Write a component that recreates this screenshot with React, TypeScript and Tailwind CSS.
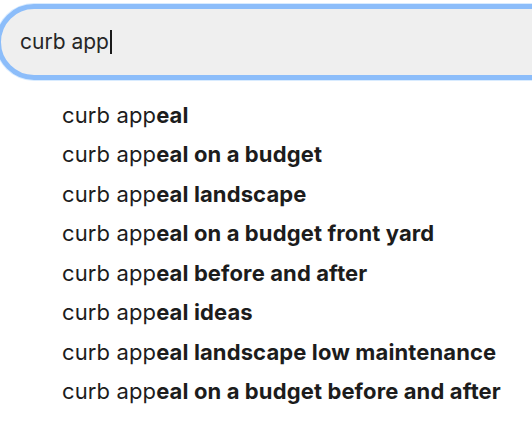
import { useState } from "react";

const suggestions = [
    "",
    " on a budget",
    " landscape",
    " on a budget front yard",
    " before and after",
    " ideas",
    " landscape low maintenance",
    " on a budget before and after",
];

export default function App() {
    const [query] = useState("curb app");

    return (
        <div className="w-[532px] h-[424px] bg-white overflow-hidden font-['Inter',sans-serif] text-[#1c1c1c]">
            <div className="pt-[4px] w-[600px] -ml-[4px]">
                <div className="h-[76px] rounded-full border-[5px] border-[#8cbdfa] bg-[#efefef] shadow-[0_0_0_1px_#d8ebff] flex items-center pl-[19px]">
                    <span className="text-[21px] text-[#262626]">{query}</span>
                    <span className="w-[2px] h-[24px] bg-[#1a1a1a] ml-[1px]" />
                </div>
            </div>

            <ul className="pt-[15px] pl-[62px]">
                {suggestions.map((rest, i) => (
                    <li key={i} className="h-[39.5px] flex items-center text-[22px] leading-none whitespace-nowrap tracking-[0.12px]">
                        <span>{query}</span>
                        <span className="font-bold">eal{rest}</span>
                    </li>
                ))}
            </ul>
        </div>
    );
}
